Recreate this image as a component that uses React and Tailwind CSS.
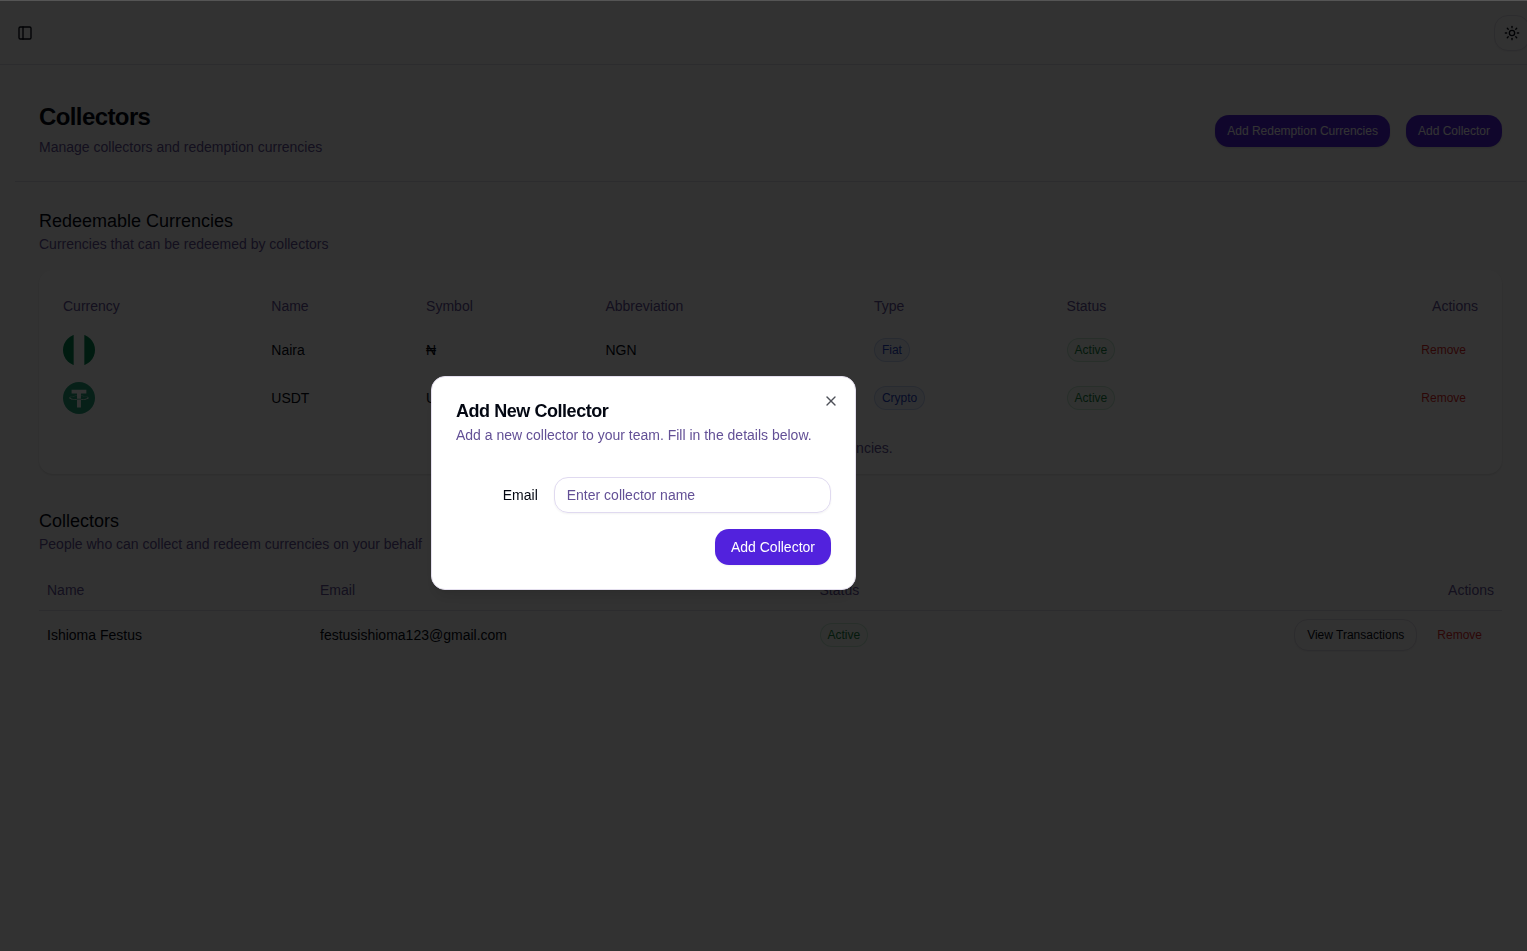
import { useState } from "react";
import { PanelLeft, Sun, X } from "lucide-react";

const CURRENCIES = [
  { name: "Naira", symbol: "₦", abbreviation: "NGN", type: "Fiat", icon: NairaIcon },
  { name: "USDT", symbol: "USDT", abbreviation: "USDT", type: "Crypto", icon: TetherIcon },
];

const COLLECTORS = [{ name: "Ishioma Festus", email: "festusishioma123@gmail.com" }];

export default function App() {
  const [open, setOpen] = useState(true);

  return (
    <div className="min-h-screen overflow-hidden bg-[#fafafa] font-['Liberation_Sans',Arial,sans-serif] text-sm text-[#030712]">
      <header className="mt-px flex h-16 items-center justify-between border-b border-[#dcd9e4] pl-[11px]">
        <button type="button" aria-label="Toggle sidebar" className="flex size-7 items-center justify-center">
          <PanelLeft size={16} />
        </button>
        <button
          type="button"
          aria-label="Toggle theme"
          className="-mr-[3px] flex size-9 items-center justify-center rounded-[14px] border border-[#dcd9e4] bg-[#fafafa] shadow-xs"
        >
          <Sun size={16} />
        </button>
      </header>

      <main className="pr-px pl-[15px]">
        <div className="flex items-center justify-between border-b border-[#dcd9e4] px-6 pt-9 pb-5">
          <div>
            <h1 className="text-2xl font-bold tracking-tight">Collectors</h1>
            <p className="leading-7 text-[#635096]">Manage collectors and redemption currencies</p>
          </div>
          <div className="flex gap-4">
            <SmallButton>Add Redemption Currencies</SmallButton>
            <SmallButton onClick={() => setOpen(true)}>Add Collector</SmallButton>
          </div>
        </div>

        <div className="flex flex-col gap-8 p-6">
          <section>
            <SectionTitle title="Redeemable Currencies" text="Currencies that can be redeemed by collectors" />
            <div className="rounded-[14px] bg-white p-4 shadow-sm">
              <table className="w-full">
                <thead>
                  <tr>
                    <Th>Currency</Th>
                    <Th>Name</Th>
                    <Th>Symbol</Th>
                    <Th>Abbreviation</Th>
                    <Th>Type</Th>
                    <Th>Status</Th>
                    <Th right>Actions</Th>
                  </tr>
                </thead>
                <tbody>
                  {CURRENCIES.map(({ name, symbol, abbreviation, type, icon: Icon }) => (
                    <tr key={name}>
                      <td className="p-2">
                        <Icon />
                      </td>
                      <td className="p-2">{name}</td>
                      <td className="p-2">{symbol}</td>
                      <td className="p-2">{abbreviation}</td>
                      <td className="p-2">
                        <Badge tone="blue">{type}</Badge>
                      </td>
                      <td className="p-2">
                        <Badge>Active</Badge>
                      </td>
                      <td className="p-2">
                        <div className="flex justify-end">
                          <RemoveButton />
                        </div>
                      </td>
                    </tr>
                  ))}
                </tbody>
              </table>
              <p className="mt-4 text-center text-[#635096]">A list of all your redeemable currencies.</p>
            </div>
          </section>

          <section>
            <SectionTitle title="Collectors" text="People who can collect and redeem currencies on your behalf" />
            <table className="w-full">
              <thead>
                <tr className="border-b border-[#dcd9e4]">
                  <Th>Name</Th>
                  <Th>Email</Th>
                  <Th>Status</Th>
                  <Th right>Actions</Th>
                </tr>
              </thead>
              <tbody>
                {COLLECTORS.map((c) => (
                  <tr key={c.email}>
                    <td className="p-2">{c.name}</td>
                    <td className="p-2">{c.email}</td>
                    <td className="p-2">
                      <Badge>Active</Badge>
                    </td>
                    <td className="p-2">
                      <div className="flex justify-end gap-2">
                        <button
                          type="button"
                          className="h-8 rounded-[14px] border border-[#dcd9e4] bg-[#fafafa] px-3 text-xs shadow-xs"
                        >
                          View Transactions
                        </button>
                        <RemoveButton />
                      </div>
                    </td>
                  </tr>
                ))}
              </tbody>
            </table>
          </section>
        </div>
      </main>

      {open && <CollectorDialog onClose={() => setOpen(false)} />}
    </div>
  );
}

function CollectorDialog({ onClose }) {
  const [email, setEmail] = useState("");

  return (
    <div className="fixed inset-0 z-50 flex items-center justify-center border-t border-[#555] bg-black/80 pt-[14px] pr-60">
      <div
        role="dialog"
        aria-modal="true"
        aria-labelledby="dialog-title"
        className="relative w-full max-w-[425px] rounded-[14px] border border-[#e4dfee] bg-white p-6 shadow-lg"
      >
        <h2 id="dialog-title" className="text-lg leading-5 font-semibold tracking-tight">
          Add New Collector
        </h2>
        <p className="mt-1 text-[#635096]">Add a new collector to your team. Fill in the details below.</p>

        <form onSubmit={(e) => e.preventDefault()} className="mt-8">
          <div className="grid grid-cols-4 items-center gap-4">
            <label htmlFor="collector-email" className="text-right">
              Email
            </label>
            <input
              id="collector-email"
              value={email}
              onChange={(e) => setEmail(e.target.value)}
              placeholder="Enter collector name"
              className="col-span-3 h-9 rounded-[14px] border border-[#e0daf0] px-3 shadow-xs placeholder:text-[#635096] focus:outline-none"
            />
          </div>
          <div className="mt-4 flex justify-end">
            <button type="submit" className="h-9 rounded-[14px] bg-[#5222dd] px-4 text-white shadow-xs">
              Add Collector
            </button>
          </div>
        </form>

        <button type="button" aria-label="Close" onClick={onClose} className="absolute top-4 right-4 opacity-70">
          <X size={16} />
        </button>
      </div>
    </div>
  );
}

function SectionTitle({ title, text }) {
  return (
    <div className="pb-[18px]">
      <h2 className="text-lg leading-[30px]">{title}</h2>
      <p className="leading-4 text-[#635096]">{text}</p>
    </div>
  );
}

function SmallButton({ children, onClick }) {
  return (
    <button
      type="button"
      onClick={onClick}
      className="h-8 rounded-[14px] bg-[#5222dd] px-3 text-xs text-white shadow-sm"
    >
      {children}
    </button>
  );
}

function RemoveButton() {
  return (
    <button type="button" className="h-8 px-3 text-xs text-[#dc2626]">
      Remove
    </button>
  );
}

function Th({ children, right }) {
  return (
    <th className={`h-10 px-2 font-normal text-[#635096] ${right ? "text-right" : "text-left"}`}>{children}</th>
  );
}

function Badge({ children, tone }) {
  const colors =
    tone === "blue"
      ? "bg-[#f1f6fd] text-[#1e40c0] ring-[#1d4ed8]/20"
      : "bg-[#f3faf5] text-[#15803d] ring-[#16a34a]/20";
  return (
    <span className={`inline-flex rounded-xl px-2 py-1 text-xs ring-1 ring-inset ${colors}`}>{children}</span>
  );
}

function NairaIcon() {
  return (
    <svg viewBox="0 0 32 32" className="size-8 rounded-full" aria-hidden="true">
      <path fill="#fff" d="M0 0h32v32H0z" />
      <path fill="#008751" d="M0 0h10.67v32H0zM21.33 0H32v32H21.33z" />
    </svg>
  );
}

function TetherIcon() {
  return (
    <svg viewBox="0 0 32 32" className="size-8" aria-hidden="true">
      <circle cx="16" cy="16" r="16" fill="#26a17b" />
      <path
        fill="#fff"
        d="M17.922 17.383v-.002c-.11.008-.677.042-1.942.042-1.01 0-1.721-.03-1.971-.042v.003c-3.888-.171-6.79-.848-6.79-1.658 0-.809 2.902-1.486 6.79-1.66v2.644c.254.018.982.061 1.988.061 1.207 0 1.812-.05 1.925-.06v-2.643c3.88.173 6.775.85 6.775 1.658 0 .81-2.895 1.485-6.775 1.657m0-3.59v-2.366h5.414V7.819H8.595v3.608h5.414v2.365c-4.4.202-7.709 1.074-7.709 2.118 0 1.044 3.309 1.915 7.709 2.118v7.582h3.913v-7.584c4.393-.202 7.694-1.073 7.694-2.116 0-1.043-3.301-1.914-7.694-2.117"
      />
    </svg>
  );
}
